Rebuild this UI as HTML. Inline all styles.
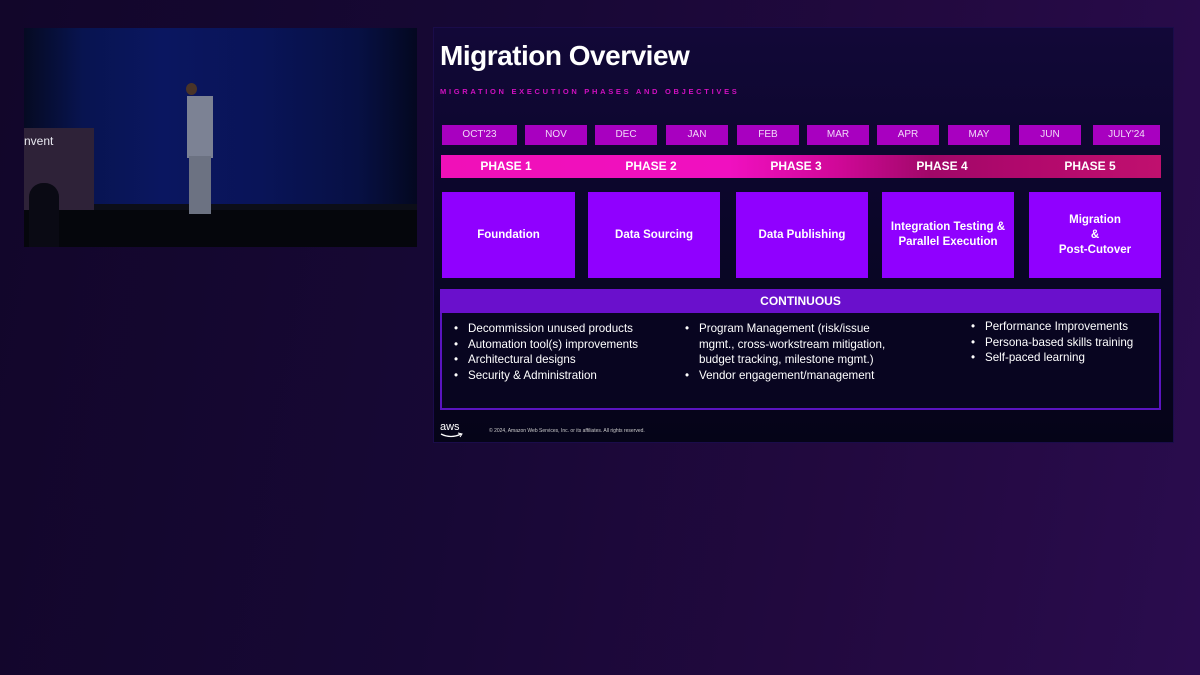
<!DOCTYPE html>
<html><head><meta charset="utf-8"><style>
*{margin:0;padding:0;box-sizing:border-box}
body{width:1200px;height:675px;overflow:hidden;position:relative;font-family:"Liberation Sans",sans-serif;
background:linear-gradient(100deg,#12062a 0%,#170835 40%,#22093f 70%,#2a0c4e 100%)}
.abs{position:absolute}
#video{left:24px;top:28px;width:393px;height:219px;overflow:hidden;
background:linear-gradient(90deg,#050a22 0%,#081450 15%,#0a1660 35%,#091458 60%,#071044 85%,#040820 100%)}
.slide{left:433px;top:27px;width:741px;height:416px;background:linear-gradient(180deg,#120838 0%,#0a0628 50%,#050418 100%);border:1px solid #1a0c4a}
.m{top:125px;height:20px;background:#a800c0;color:#f0d8f8;font-size:10px;text-align:center;line-height:20px}
.ph{top:155px;left:441px;width:720px;height:23px;background:linear-gradient(90deg,#f010b8 0%,#f010c0 40%,#d00898 55%,#a00868 68%,#b0086c 80%,#c0106e 100%)}
.pl{top:155px;height:23px;line-height:23px;color:#fff;font-weight:bold;font-size:12px;transform:translateX(-50%)}
.b{top:192px;height:86px;background:#9000ff;color:#fff;font-weight:bold;font-size:11.5px;display:flex;align-items:center;justify-content:center;text-align:center;line-height:15px}
ul{list-style:none;color:#fff;font-size:11.6px;line-height:15.5px}
li{position:relative;padding-left:14px}
li:before{content:"•";position:absolute;left:0}
</style></head><body>
<div class="abs" id="video">
  <div class="abs" style="left:0;top:100px;width:70px;height:119px;background:#2e2238"></div>
  <div class="abs" style="left:0;top:106px;color:#e8e8f0;font-size:12px">nvent</div>
  <div class="abs" style="left:0;top:182px;width:393px;height:37px;background:#05060c"></div>
  <div class="abs" style="left:70px;top:176px;width:323px;height:6px;background:#0c0e18"></div>
  <div class="abs" style="left:162px;top:55px;width:11px;height:12px;border-radius:50%;background:#4a3428"></div>
  <div class="abs" style="left:163px;top:68px;width:26px;height:62px;background:#7c8294"></div>
  <div class="abs" style="left:165px;top:128px;width:22px;height:58px;background:#6c7282"></div>
  <div class="abs" style="left:5px;top:155px;width:30px;height:64px;border-radius:14px 14px 0 0;background:#0a0a14"></div>
</div>
<div class="abs slide"></div>
<div class="abs" style="left:440px;top:40px;color:#fff;font-size:28px;font-weight:bold;letter-spacing:-0.5px">Migration Overview</div>
<div class="abs" style="left:440px;top:87px;color:#d010c0;font-size:7.5px;font-weight:bold;letter-spacing:2.7px">MIGRATION EXECUTION PHASES AND OBJECTIVES</div>

<div class="abs m" style="left:442px;width:75px">OCT'23</div>
<div class="abs m" style="left:525px;width:62px">NOV</div>
<div class="abs m" style="left:595px;width:62px">DEC</div>
<div class="abs m" style="left:666px;width:62px">JAN</div>
<div class="abs m" style="left:737px;width:62px">FEB</div>
<div class="abs m" style="left:807px;width:62px">MAR</div>
<div class="abs m" style="left:877px;width:62px">APR</div>
<div class="abs m" style="left:948px;width:62px">MAY</div>
<div class="abs m" style="left:1019px;width:62px">JUN</div>
<div class="abs m" style="left:1093px;width:67px">JULY'24</div>

<div class="abs ph"></div>
<div class="abs pl" style="left:506px">PHASE 1</div>
<div class="abs pl" style="left:651px">PHASE 2</div>
<div class="abs pl" style="left:796px">PHASE 3</div>
<div class="abs pl" style="left:942px">PHASE 4</div>
<div class="abs pl" style="left:1090px">PHASE 5</div>

<div class="abs b" style="left:442px;width:133px">Foundation</div>
<div class="abs b" style="left:588px;width:132px">Data Sourcing</div>
<div class="abs b" style="left:736px;width:132px">Data Publishing</div>
<div class="abs b" style="left:882px;width:132px">Integration Testing &amp;<br>Parallel Execution</div>
<div class="abs b" style="left:1029px;width:132px">Migration<br>&amp;<br>Post-Cutover</div>

<div class="abs" style="left:440px;top:289px;width:721px;height:121px;border:2px solid #5a14c0;background:#080520"></div>
<div class="abs" style="left:440px;top:289px;width:721px;height:24px;background:#6a10cc;color:#fff;font-weight:bold;font-size:12px;text-align:center;line-height:24px">CONTINUOUS</div>
<ul class="abs" style="left:454px;top:321px"><li>Decommission unused products</li><li>Automation tool(s) improvements</li><li>Architectural designs</li><li>Security &amp; Administration</li></ul>
<ul class="abs" style="left:685px;top:321px"><li>Program Management (risk/issue<br>mgmt., cross-workstream mitigation,<br>budget tracking, milestone mgmt.)</li><li>Vendor engagement/management</li></ul>
<ul class="abs" style="left:971px;top:319px"><li>Performance Improvements</li><li>Persona-based skills training</li><li>Self-paced learning</li></ul>

<div class="abs" style="left:440px;top:422px;color:#fff;font-size:11px;line-height:10px">aws</div>
<svg class="abs" style="left:440px;top:432px" width="24" height="8"><path d="M1 2 Q11 7 21 2" stroke="#fff" stroke-width="1.3" fill="none"/><path d="M18 1 L22 2 L20 5" stroke="#fff" stroke-width="1" fill="none"/></svg>
<div class="abs" style="left:489px;top:428px;color:#ccc;font-size:5px">© 2024, Amazon Web Services, Inc. or its affiliates. All rights reserved.</div>
</body></html>
